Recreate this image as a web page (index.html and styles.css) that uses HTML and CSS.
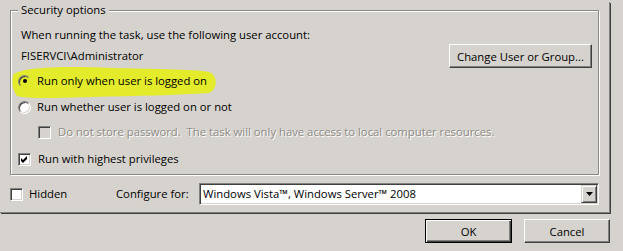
FILE: index.html
```html
<!DOCTYPE html>
<html>
<head>
    <meta charset="UTF-8">
    <title>Security options</title>
    <link rel="stylesheet" href="styles.css">
</head>
<body>
    <div class="panel">
        <fieldset class="group">
            <legend>Security options</legend>
            <div class="line">When running the task, use the following user account:</div>
            <div class="account">
                <span>FISERVCI\Administrator</span>
                <button class="btn btn-change">Change User or Group...</button>
            </div>

            <!-- highlighted option -->
            <div class="option option-1">
                <svg class="marker" width="206" height="33" viewBox="0 0 206 33">
                    <path d="M2 8 C 14 1, 50 0, 100 2 C 140 3, 180 3, 197 6 C 206 9, 206 23, 197 27 C 165 29, 125 30, 80 31 C 45 32, 15 33, 5 30 C 0 24, -1 13, 2 8 Z" fill="#e3eb2a"/>
                </svg>
                <span class="radio radio-on radio-marked"></span>
                <span class="option-text">Run only when user is logged on</span>
            </div>
            <div class="option option-2">
                <span class="radio"></span>
                <span class="option-text">Run whether user is logged on or not</span>
            </div>
            <div class="option option-3">
                <span class="check check-disabled"></span>
                <span class="option-text text-disabled">Do not store password.&nbsp; The task will only have access to local computer resources.</span>
            </div>
            <div class="option option-4">
                <span class="check">
                    <svg width="13" height="13" viewBox="0 0 13 13"><polygon points="3,5 5,7 9,3 9,6 5,10 3,8" fill="#000"/></svg>
                </span>
                <span class="option-text">Run with highest privileges</span>
            </div>
        </fieldset>

        <div class="config">
            <div class="hidden-opt">
                <span class="check"></span>
                <span>Hidden</span>
            </div>
            <span class="config-label">Configure for:</span>
            <div class="combo">
                <span class="combo-text">Windows Vista™, Windows Server™ 2008</span>
                <span class="combo-btn">
                    <svg width="7" height="4" viewBox="0 0 7 4"><polygon points="0,0 7,0 3.5,4" fill="#000"/></svg>
                </span>
            </div>
        </div>
    </div>

    <div class="actions">
        <button class="btn btn-action btn-default">OK</button>
        <button class="btn btn-action">Cancel</button>
    </div>
</body>
</html>
```

FILE: styles.css
```css
* {
    box-sizing: border-box;
    margin: 0;
    padding: 0;
}
body {
    width: 623px;
    height: 251px;
    overflow: hidden;
    background-color: #d6d3ce;
    color: #000;
    font-family: "Open Sans", "Noto Sans", sans-serif;
    font-size: 11.3px;
    line-height: 16px;
}
.panel {
    width: 610px;
    padding: 0 10px 7px 10px;
    border-right: 1px solid #808080;
    border-bottom: 1px solid #808080;
    box-shadow: 1px 1px 0 #404040;
}
.group {
    margin-top: 2px;
    padding: 9px 6px 5px 7px;
    border: 1px solid #8c8984;
    box-shadow: inset 1px 1px 0 #fff, 1px 1px 0 #fff;
}
.group legend {
    padding: 0 3px;
    line-height: 16px;
    background-color: #d6d3ce;
}
.line {
    height: 16px;
    padding-left: 3px;
}
.account {
    display: flex;
    align-items: center;
    justify-content: space-between;
    height: 24px;
    margin-top: 1px;
    padding-left: 3px;
}
.option {
    position: relative;
    display: flex;
    align-items: center;
    gap: 7px;
    height: 20px;
}
.option-1 { margin-top: 3px; gap: 6px; }
.option-2 { margin-top: 6px; gap: 6px; }
.option-3 { margin-top: 5px; padding-left: 20px; }
.option-4 { margin-top: 7px; }
.option-text {
    position: relative;
    white-space: nowrap;
}
.text-disabled {
    color: #8e8b86;
    text-shadow: 1px 1px 0 #fff;
}
.marker {
    position: absolute;
    left: -6px;
    top: -5px;
}

/* classic radio button */
.radio {
    position: relative;
    flex: none;
    width: 13px;
    height: 13px;
    border-radius: 50%;
    border: 1px solid;
    border-color: #808080 #fff #fff #808080;
    box-shadow: inset 1px 1px 0 #404040, inset -1px -1px 0 #d6d3ce;
    background-color: #fff;
}
.radio-on::after {
    content: "";
    position: absolute;
    left: 3.5px;
    top: 3.5px;
    width: 4px;
    height: 4px;
    border-radius: 50%;
    background-color: #000;
}
.radio-marked {
    background-color: #e3eb2a;
    border-color: #808080 #e3eb2a #e3eb2a #808080;
    box-shadow: inset 1px 1px 0 #404040;
}

/* classic checkbox */
.check {
    position: relative;
    flex: none;
    width: 13px;
    height: 13px;
    border: 1px solid;
    border-color: #808080 #fff #fff #808080;
    box-shadow: inset 1px 1px 0 #404040, inset -1px -1px 0 #d6d3ce;
    background-color: #fff;
}
.check svg {
    position: absolute;
    left: -1px;
    top: -1px;
}
.check-disabled {
    background-color: #d6d3ce;
}

/* buttons */
.btn {
    font-family: "Open Sans", "Noto Sans", sans-serif;
    font-size: 11.3px;
    color: #000;
    background-color: #d6d3ce;
    border: 1px solid;
    border-color: #fff #404040 #404040 #fff;
    box-shadow: inset -1px -1px 0 #808080;
    height: 24px;
}
.btn-change {
    width: 143px;
}
.btn-action {
    width: 86px;
}
.btn-default {
    width: 87px;
    border: 1px solid #000;
    box-shadow: inset 1px 1px 0 #fff, inset -1px -1px 0 #404040, inset -2px -2px 0 #808080;
}

/* bottom row */
.config {
    display: flex;
    align-items: center;
    height: 22px;
    margin-top: 8px;
}
.hidden-opt {
    display: flex;
    align-items: center;
    gap: 6px;
    width: 106px;
}
.config-label {
    width: 83px;
}
.combo {
    flex: 1;
    display: flex;
    align-items: center;
    justify-content: space-between;
    height: 22px;
    padding-left: 3px;
    border: 1px solid;
    border-color: #808080 #fff #fff #808080;
    box-shadow: inset 1px 1px 0 #404040, inset -1px -1px 0 #d6d3ce;
    background-color: #fff;
}
.combo-btn {
    display: flex;
    align-items: center;
    justify-content: center;
    width: 16px;
    height: 18px;
    margin-right: 1px;
    border: 1px solid;
    border-color: #d6d3ce #404040 #404040 #d6d3ce;
    box-shadow: inset 1px 1px 0 #fff, inset -1px -1px 0 #808080;
    background-color: #d6d3ce;
}
.actions {
    display: flex;
    justify-content: flex-end;
    gap: 12px;
    padding: 6px 13px 0 0;
}
```
